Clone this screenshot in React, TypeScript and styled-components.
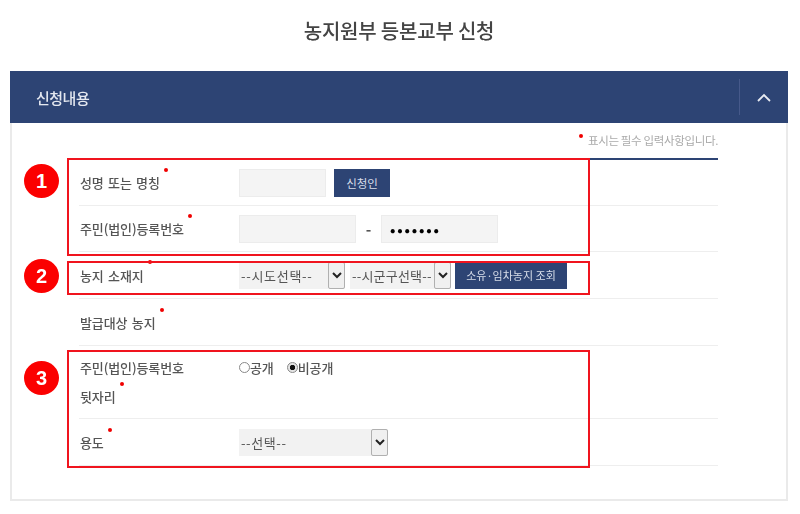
import React from 'react';
import styled, { createGlobalStyle } from 'styled-components';

const GlobalStyle = createGlobalStyle`
  html, body {
    margin: 0;
    padding: 0;
    background: #fff;
  }
  body {
    font-family: 'Noto Sans CJK KR', 'Noto Sans', sans-serif;
    color: #444;
  }
`;

const Page = styled.div`
  width: 800px;
  height: 514px;
  overflow: hidden;
  box-sizing: border-box;
  padding: 0 12px 0 10px;
  filter: blur(0.55px);
`;

const Title = styled.h1`
  margin: 0;
  height: 71px;
  padding-bottom: 10px;
  box-sizing: border-box;
  display: flex;
  align-items: center;
  justify-content: center;
  font-size: 20px;
  font-weight: 500;
  color: #444;
  letter-spacing: -0.2px;
`;

const Panel = styled.section`
  width: 778px;
  box-sizing: border-box;
`;

const PanelHeader = styled.header`
  height: 52px;
  background: #2d4474;
  display: flex;
  align-items: center;
  justify-content: space-between;
  padding-left: 26px;
  font-size: 15px;
  font-weight: 500;
  color: #e4e8f0;
  letter-spacing: -0.5px;
`;

const Toggle = styled.div`
  width: 48px;
  height: 36px;
  border-left: 1px solid #46598a;
  display: flex;
  align-items: center;
  justify-content: center;
`;

const PanelBody = styled.div`
  position: relative;
  box-sizing: border-box;
  height: 378px;
  border: 2px solid #eaeaea;
  border-top: 0;
  padding: 0 68px 0 67px;
`;

const Note = styled.p`
  position: relative;
  margin: 0;
  height: 37px;
  box-sizing: border-box;
  padding-top: 9px;
  text-align: right;
  font-size: 11.5px;
  color: #aaa;
  letter-spacing: -0.35px;
  border-bottom: 2px solid #2d4474;
`;

const Star = styled.i<{ $top?: number }>`
  position: absolute;
  top: ${(p) => p.$top ?? 0}px;
  right: -8px;
  width: 4px;
  height: 4px;
  border-radius: 50%;
  background: #f00000;
`;

const NoteText = styled.span`
  position: relative;
  display: inline-block;
`;

const NoteStar = styled(Star)`
  right: auto;
  left: -9px;
  top: 2px;
`;

const Row = styled.div<{ $height: number; $align?: string; $pad?: number }>`
  height: ${(p) => p.$height}px;
  box-sizing: border-box;
  padding-top: ${(p) => p.$pad || 0}px;
  display: flex;
  align-items: ${(p) => p.$align || 'center'};
  border-bottom: 1px solid #eeeeee;
`;

const Label = styled.div`
  width: 159px;
  margin-left: 1px;
  flex: none;
  font-size: 13px;
  font-weight: 500;
  line-height: 29px;
  color: #555;
  letter-spacing: -0.1px;
  word-spacing: 1.5px;
`;

const LabelText = styled.span`
  position: relative;
  display: inline-block;
`;

const Controls = styled.div`
  display: flex;
  align-items: center;
`;

const TextInput = styled.input<{ $width: number; $secret?: boolean }>`
  width: ${(p) => p.$width}px;
  height: 28px;
  box-sizing: border-box;
  border: 1px solid #ececec;
  background: #f4f4f4;
  padding: 0 8px;
  outline: none;
  font-family: inherit;
  font-size: ${(p) => (p.$secret ? 16 : 12)}px;
  letter-spacing: ${(p) => (p.$secret ? 1.8 : 0)}px;
  color: #000;
`;

const Dash = styled.span`
  width: 25px;
  text-align: center;
  font-size: 15px;
  font-weight: 700;
  color: #555;
`;

const NavyButton = styled.button<{ $width: number; $gap: number; $size: number }>`
  width: ${(p) => p.$width}px;
  height: 28px;
  margin-left: ${(p) => p.$gap}px;
  border: 0;
  background: #2d4474;
  color: #d8deea;
  padding: 0;
  font-family: inherit;
  font-size: ${(p) => p.$size}px;
  letter-spacing: 0;
`;

const SelectBox = styled.div<{ $width: number; $gap?: number }>`
  position: relative;
  width: ${(p) => p.$width}px;
  height: 27px;
  margin-left: ${(p) => p.$gap || 0}px;
  background: #f2f2f2;
`;

const NativeSelect = styled.select<{ $spacing: number }>`
  width: 100%;
  height: 100%;
  appearance: none;
  border: 0;
  background: transparent;
  padding: 0 0 0 2px;
  font-family: inherit;
  font-size: 13px;
  color: #555;
  letter-spacing: ${(p) => p.$spacing}px;
`;

const Arrow = styled.span`
  position: absolute;
  top: 0;
  right: 0;
  width: 17px;
  height: 27px;
  box-sizing: border-box;
  background: #f0f0f0;
  border: 1px solid #b0b0b0;
  border-radius: 2px;
  display: flex;
  align-items: center;
  justify-content: center;
  pointer-events: none;
`;

const RadioGroup = styled.div`
  display: flex;
  align-items: center;
  height: 29px;
`;

const RadioLabel = styled.label`
  display: flex;
  align-items: center;
  margin-right: 13px;
  font-size: 13px;
  font-weight: 500;
  color: #555;
  letter-spacing: -0.1px;
`;

const Radio = styled.input`
  appearance: none;
  margin: 0;
  width: 11px;
  height: 11px;
  border: 1px solid #888;
  border-radius: 50%;
  background: #fff;

  &:checked {
    background: radial-gradient(circle, #111 0 2.4px, #e4e4e4 3px);
  }
`;

const Marker = styled.div<{ $top: number; $height: number }>`
  position: absolute;
  top: ${(p) => p.$top}px;
  left: 55px;
  width: 523px;
  height: ${(p) => p.$height}px;
  box-sizing: border-box;
  border: 2px solid #f0141e;
  pointer-events: none;
`;

const Badge = styled.div<{ $top: number }>`
  position: absolute;
  top: ${(p) => p.$top}px;
  left: 12px;
  width: 35px;
  height: 34px;
  border-radius: 50%;
  background: #fb0000;
  color: #fff;
  display: flex;
  align-items: center;
  justify-content: center;
  font-family: 'Liberation Sans', sans-serif;
  font-size: 20px;
  font-weight: 700;
`;

const Chevron = () => (
  <svg width="10" height="7" viewBox="0 0 10 7" fill="none" stroke="#222" strokeWidth="2">
    <path d="M1 1l4 4 4-4" />
  </svg>
);

type FieldProps = { name: string; label: string; width: number; gap?: number; spacing: number };

const Field = ({ name, label, width, gap, spacing }: FieldProps) => (
  <SelectBox $width={width} $gap={gap}>
    <NativeSelect name={name} defaultValue="" $spacing={spacing}>
      <option value="">{label}</option>
    </NativeSelect>
    <Arrow>
      <Chevron />
    </Arrow>
  </SelectBox>
);

const Required = ({ children, top }: { children: React.ReactNode; top?: number }) => (
  <LabelText>
    {children}
    <Star $top={top} />
  </LabelText>
);

export default function App() {
  return (
    <>
      <GlobalStyle />
      <Page>
        <Title>농지원부 등본교부 신청</Title>
        <Panel>
          <PanelHeader>
            신청내용
            <Toggle>
              <svg width="14" height="9" viewBox="0 0 14 9" fill="none" stroke="#e8ebf2" strokeWidth="1.8">
                <path d="M1 8l6-6 6 6" />
              </svg>
            </Toggle>
          </PanelHeader>
          <PanelBody>
            <Note>
              <NoteText>
                <NoteStar />
                표시는 필수 입력사항입니다.
              </NoteText>
            </Note>
            <Row $height={46}>
              <Label>
                <Required>성명 또는 명칭</Required>
              </Label>
              <Controls>
                <TextInput $width={87} />
                <NavyButton $width={56} $gap={8} $size={11.5}>신청인</NavyButton>
              </Controls>
            </Row>
            <Row $height={46}>
              <Label>
                <Required>주민(법인)등록번호</Required>
              </Label>
              <Controls>
                <TextInput $width={117} />
                <Dash>-</Dash>
                <TextInput $width={117} $secret type="password" defaultValue="1234567" />
              </Controls>
            </Row>
            <Row $height={47}>
              <Label>
                <Required top={-1}>농지 소재지</Required>
              </Label>
              <Controls>
                <Field name="sido" label="--시도선택--" width={106} spacing={0.7} />
                <Field name="sigungu" label="--시군구선택--" width={101} gap={5} spacing={0.2} />
                <NavyButton $width={112} $gap={4} $size={11}>소유·임차농지 조회</NavyButton>
              </Controls>
            </Row>
            <Row $height={47}>
              <Label>
                <Required>발급대상 농지</Required>
              </Label>
            </Row>
            <Row $height={73} $align="flex-start" $pad={7}>
              <Label>
                주민(법인)등록번호
                <br />
                <Required>뒷자리</Required>
              </Label>
              <RadioGroup>
                <RadioLabel>
                  <Radio type="radio" name="open" />
                  공개
                </RadioLabel>
                <RadioLabel>
                  <Radio type="radio" name="open" defaultChecked />
                  비공개
                </RadioLabel>
              </RadioGroup>
            </Row>
            <Row $height={47}>
              <Label>
                <Required>용도</Required>
              </Label>
              <Controls>
                <Field name="usage" label="--선택--" width={149} spacing={0.6} />
              </Controls>
            </Row>
            <Marker $top={35} $height={98} />
            <Marker $top={138} $height={34} />
            <Marker $top={227} $height={118} />
            <Badge $top={41}>1</Badge>
            <Badge $top={136}>2</Badge>
            <Badge $top={238}>3</Badge>
          </PanelBody>
        </Panel>
      </Page>
    </>
  );
}
